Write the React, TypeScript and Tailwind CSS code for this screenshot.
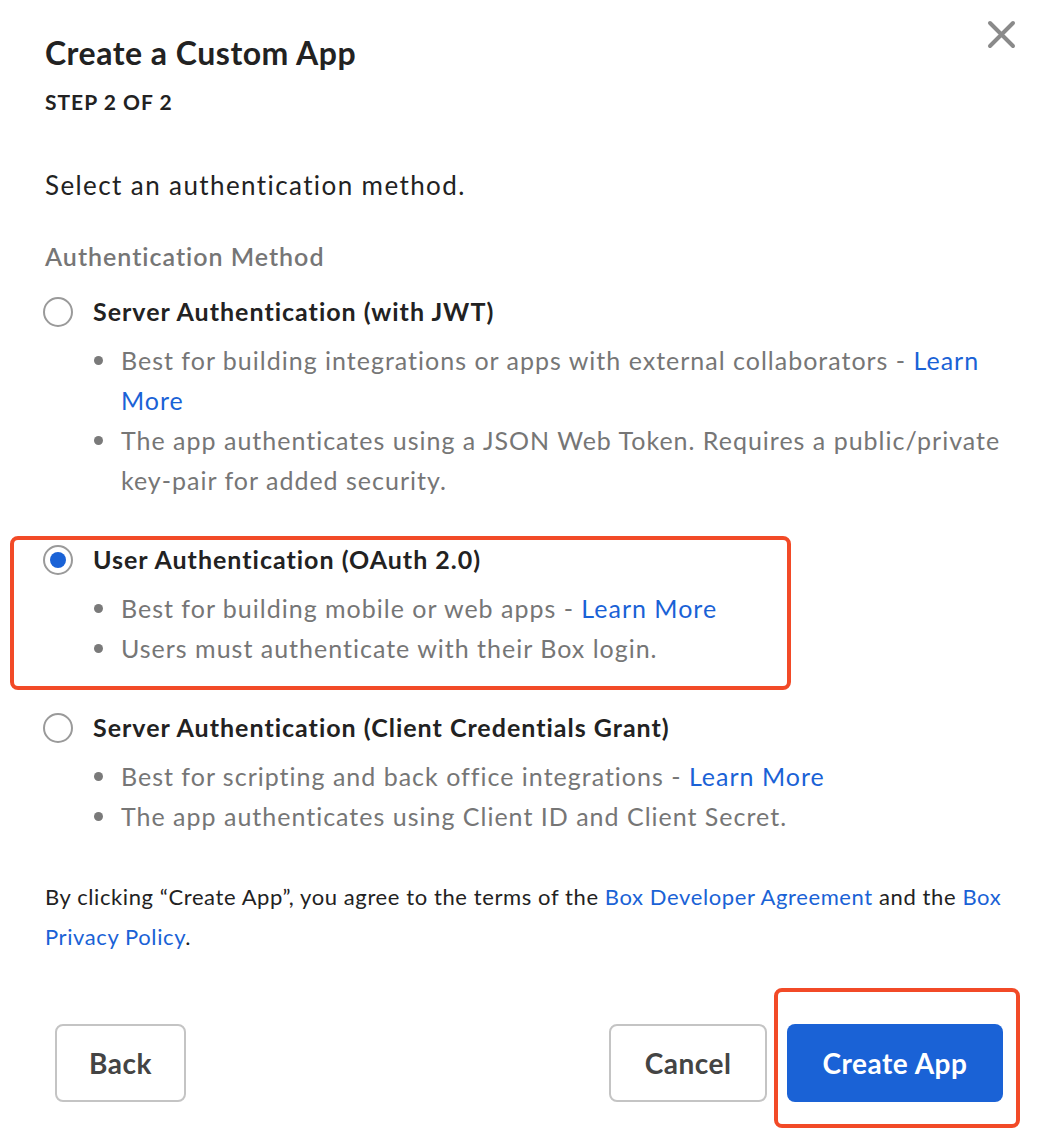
import React from "react";

const font = { fontFamily: "Lato, 'Open Sans', sans-serif" };

function Radio({ checked }: { checked?: boolean }) {
  return (
    <span className="flex h-[30px] w-[30px] shrink-0 items-center justify-center rounded-full border-2 border-[#9a9a9a] bg-white">
      {checked && <span className="h-[16px] w-[16px] rounded-full bg-[#1a62d6]" />}
    </span>
  );
}

function Bullet({ children }: { children: React.ReactNode }) {
  return (
    <li className="flex">
      <span className="w-[78px] shrink-0 pl-[51px] pt-[16px]">
        <span className="block h-[9px] w-[9px] rounded-full bg-[#7a7a7a]" />
      </span>
      <span className="pr-[8px]">{children}</span>
    </li>
  );
}

function Link({ children }: { children: React.ReactNode }) {
  return <span className="text-[#1a62d6]">{children}</span>;
}

function Option({
  checked,
  title,
  bullets,
}: {
  checked?: boolean;
  title: string;
  bullets: React.ReactNode[];
}) {
  return (
    <div>
      <div className="flex h-[40px] items-center gap-[20px]">
        <Radio checked={checked} />
        <span className="text-[25px] font-bold tracking-[1px] text-[#222]">{title}</span>
      </div>
      <ul className="mt-[8px] text-[25px] leading-[40px] tracking-[1px] text-[#767676]">
        {bullets.map((b, i) => (
          <Bullet key={i}>{b}</Bullet>
        ))}
      </ul>
    </div>
  );
}

export default function App() {
  return (
    <div className="relative min-h-[1148px] w-[1052px] bg-white" style={font}>
      <button className="absolute left-[986px] top-[19px] h-[31px] w-[31px]">
        <svg viewBox="0 0 31 31" className="h-[31px] w-[31px]">
          <path d="M4 4 L27 27 M27 4 L4 27" stroke="#8a8a8a" strokeWidth="4" strokeLinecap="round" />
        </svg>
      </button>
      <div className="pl-[45px] pr-[32px] pt-[33px]">
        <h1 className="text-[32px] font-bold leading-[40px] tracking-[0.5px] text-[#222]">Create a Custom App</h1>
        <div className="mt-[14px] text-[21px] font-bold leading-[30px] tracking-[1px] text-[#222]">
          STEP 2 OF 2
        </div>
        <p className="mt-[48px] text-[26px] leading-[40px] tracking-[1.4px] text-[#222]">
          Select an authentication method.
        </p>
        <div className="mt-[31px] text-[25px] font-semibold leading-[40px] tracking-[1px] text-[#767676]">
          Authentication Method
        </div>
      </div>
      <div className="mt-[16px] pl-[43px] pr-[32px]">
        <Option
          title="Server Authentication (with JWT)"
          bullets={[
            <>
              Best for building integrations or apps with external collaborators - <Link>Learn More</Link>
            </>,
            <>
              The app authenticates using a JSON Web Token. Requires a public/private{" "}
              <span className="whitespace-nowrap">key-pair</span> for added security.
            </>,
          ]}
        />
      </div>
      <div className="ml-[10px] mt-[36px] w-[781px] rounded-[8px] border-4 border-[#f24a27] pb-[18px] pl-[29px]">
        <Option
          checked
          title="User Authentication (OAuth 2.0)"
          bullets={[
            <>
              Best for building mobile or web apps - <Link>Learn More</Link>
            </>,
            <>Users must authenticate with their Box login.</>,
          ]}
        />
      </div>
      <div className="mt-[18px] pl-[43px] pr-[32px]">
        <Option
          title="Server Authentication (Client Credentials Grant)"
          bullets={[
            <>
              Best for scripting and back office integrations - <Link>Learn More</Link>
            </>,
            <>The app authenticates using Client ID and Client Secret.</>,
          ]}
        />
      </div>
      <p className="mt-[41px] pl-[45px] pr-[40px] text-[22px] leading-[40px] tracking-[0.6px] text-[#222]">
        By clicking “Create App”, you agree to the terms of the <Link>Box Developer Agreement</Link> and the{" "}
        <Link>Box Privacy Policy</Link>.
      </p>
      <div className="mt-[31px] flex items-start pl-[55px] pr-[32px]">
        <button className="mt-[36px] h-[78px] w-[131px] rounded-[8px] border-2 border-[#c4c4c4] bg-white text-[28px] font-bold tracking-[0.5px] text-[#444]">
          Back
        </button>
        <div className="flex-1" />
        <button className="mt-[36px] h-[78px] w-[158px] rounded-[8px] border-2 border-[#c4c4c4] bg-white text-[28px] font-bold tracking-[0.5px] text-[#444]">
          Cancel
        </button>
        <div className="ml-[7px] rounded-[8px] border-4 border-[#f24a27] pb-[22px] pl-[9px] pr-[13px] pt-[32px]">
          <button className="h-[78px] w-[216px] rounded-[8px] bg-[#1a62d6] text-[28px] font-bold tracking-[0.5px] text-white">
            Create App
          </button>
        </div>
      </div>
    </div>
  );
}
